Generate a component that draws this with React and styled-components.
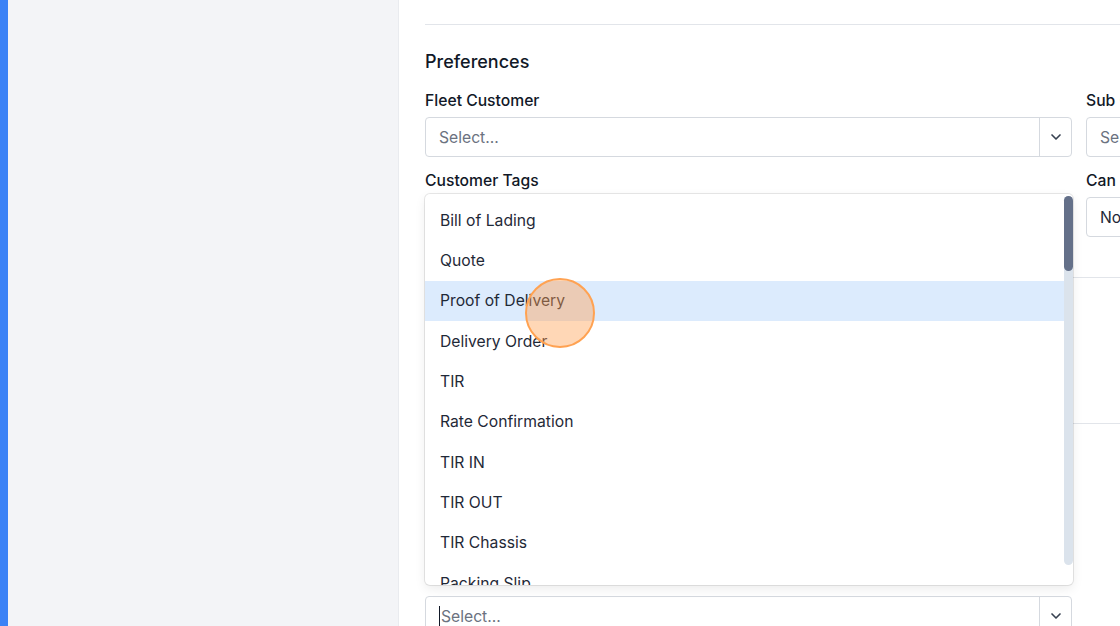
import React from 'react'
import styled, { createGlobalStyle } from 'styled-components'
import { ChevronDown } from 'lucide-react'

const Global = createGlobalStyle`
  html, body {
    margin: 0;
    padding: 0;
    height: 100%;
    overflow: hidden;
  }
  body {
    font-family: Inter, "Noto Sans", "Liberation Sans", sans-serif;
    color: #1f2937;
    background: #fff;
  }
  * { box-sizing: border-box; }
`

const Shell = styled.div`
  display: flex;
  width: 1120px;
  height: 626px;
  overflow: hidden;
`

const Accent = styled.div`
  width: 8px;
  flex: none;
  background: #3b82f6;
`

const Sidebar = styled.aside`
  width: 391px;
  flex: none;
  background: #f3f4f7;
  border-right: 1px solid #e9ebef;
`

const Main = styled.main`
  flex: 1;
  min-width: 0;
  padding-left: 26px;
  overflow: hidden;
`

const Rule = styled.div`
  height: 1px;
  background: #e2e5ea;
  margin-top: ${p => p.$top || 0}px;
  width: 1400px;
`

const Section = styled.section`
  padding: ${p => p.$pad || '0'};
`

const Title = styled.h2`
  margin: 0 0 16px;
  padding-top: 1px;
  font-size: 18px;
  line-height: 24px;
  font-weight: 500;
  color: #111827;
`

const Grid = styled.div`
  display: grid;
  grid-template-columns: 647px 647px;
  column-gap: 14px;
  row-gap: 13px;
`

const Field = styled.div`
  display: flex;
  flex-direction: column;
  gap: 6px;
  position: relative;
  margin-top: ${p => p.$offset || 0}px;
`

const Label = styled.label`
  padding-top: 1px;
  font-size: 15.7px;
  line-height: 20px;
  font-weight: 500;
  color: #111827;
  white-space: nowrap;
`

const Control = styled.div`
  display: flex;
  height: 40px;
  border: 1px solid #d5d9df;
  border-radius: 4px;
  background: #fff;
`

const Value = styled.div`
  flex: 1;
  display: flex;
  align-items: center;
  padding-left: 13px;
  font-size: 15.7px;
  color: ${p => (p.$placeholder ? '#6b7280' : '#1f2937')};
`

const Caret = styled.span`
  width: 1px;
  height: 20px;
  background: #111827;
  margin-right: 1px;
`

const Indicator = styled.div`
  width: 32px;
  flex: none;
  display: flex;
  align-items: center;
  justify-content: center;
  border-left: 1px solid #d5d9df;
  color: #374151;
`

const Menu = styled.div`
  position: absolute;
  left: 0;
  bottom: calc(100% + 11px);
  width: 648px;
  height: 391px;
  display: flex;
  background: #fff;
  border-radius: 5px;
  box-shadow: 0 0 0 1px rgba(0, 0, 0, 0.09), 0 4px 11px rgba(0, 0, 0, 0.08);
  overflow: hidden;
  z-index: 5;
`

const List = styled.ul`
  flex: 1;
  margin: 0;
  padding: 6px 0 0;
  list-style: none;
`

const Option = styled.li`
  height: 40.33px;
  display: flex;
  align-items: center;
  padding-left: 15px;
  font-size: 15.7px;
  color: #1f2937;
  background: ${p => (p.$active ? '#dcebfd' : 'transparent')};
`

const Track = styled.div`
  width: 9px;
  flex: none;
  margin: 2px 0 20px;
  border-radius: 5px;
  background: #dbe3ec;
  display: flex;
  flex-direction: column;
`

const Thumb = styled.div`
  height: 75px;
  border-radius: 5px;
  background: #647089;
`

const Pointer = styled.div`
  position: fixed;
  left: 525px;
  top: 278px;
  width: 70px;
  height: 70px;
  border-radius: 50%;
  border: 2px solid #ffa252;
  background: rgba(255, 160, 80, 0.42);
  z-index: 10;
  pointer-events: none;
`

const tags = [
  'Bill of Lading',
  'Quote',
  'Proof of Delivery',
  'Delivery Order',
  'TIR',
  'Rate Confirmation',
  'TIR IN',
  'TIR OUT',
  'TIR Chassis',
  'Packing Slip',
  'Invoice',
]

const Select = ({ value, placeholder = 'Select...', focused, noIndicator }) => (
  <Control>
    <Value $placeholder={!value}>
      {focused && <Caret />}
      {value || placeholder}
    </Value>
    {!noIndicator && (
      <Indicator>
        <ChevronDown size={16} strokeWidth={2.5} />
      </Indicator>
    )}
  </Control>
)

const App = () => {
  return (
    <Shell>
      <Global />
      <Accent />
      <Sidebar />
      <Main>
        <Rule $top={24} />
        <Section $pad="24px 0 40px">
          <Title>Preferences</Title>
          <Grid>
            <Field>
              <Label>Fleet Customer</Label>
              <Select />
            </Field>
            <Field>
              <Label>Sub Customer Of</Label>
              <Select />
            </Field>
            <Field>
              <Label>Customer Tags</Label>
              <Select />
            </Field>
            <Field>
              <Label>Can Be Billed</Label>
              <Select value="No" />
            </Field>
          </Grid>
        </Section>
        <Rule />
        <Section $pad="39px 0">
          <Grid>
            <Field>
              <Label>Payment Terms</Label>
              <Select />
            </Field>
          </Grid>
        </Section>
        <Rule />
        <Section $pad="24px 0 0">
          <Title>Documents</Title>
          <Grid>
            <Field>
              <Label>Required Documents</Label>
              <Select />
            </Field>
            <div />
            <Field $offset={27}>
              <Select focused />
              <Menu>
                <List>
                  {tags.map((t, i) => (
                    <Option key={t} $active={i === 2}>
                      {t}
                    </Option>
                  ))}
                </List>
                <Track>
                  <Thumb />
                </Track>
              </Menu>
            </Field>
          </Grid>
        </Section>
      </Main>
      <Pointer />
    </Shell>
  )
}

export default App
